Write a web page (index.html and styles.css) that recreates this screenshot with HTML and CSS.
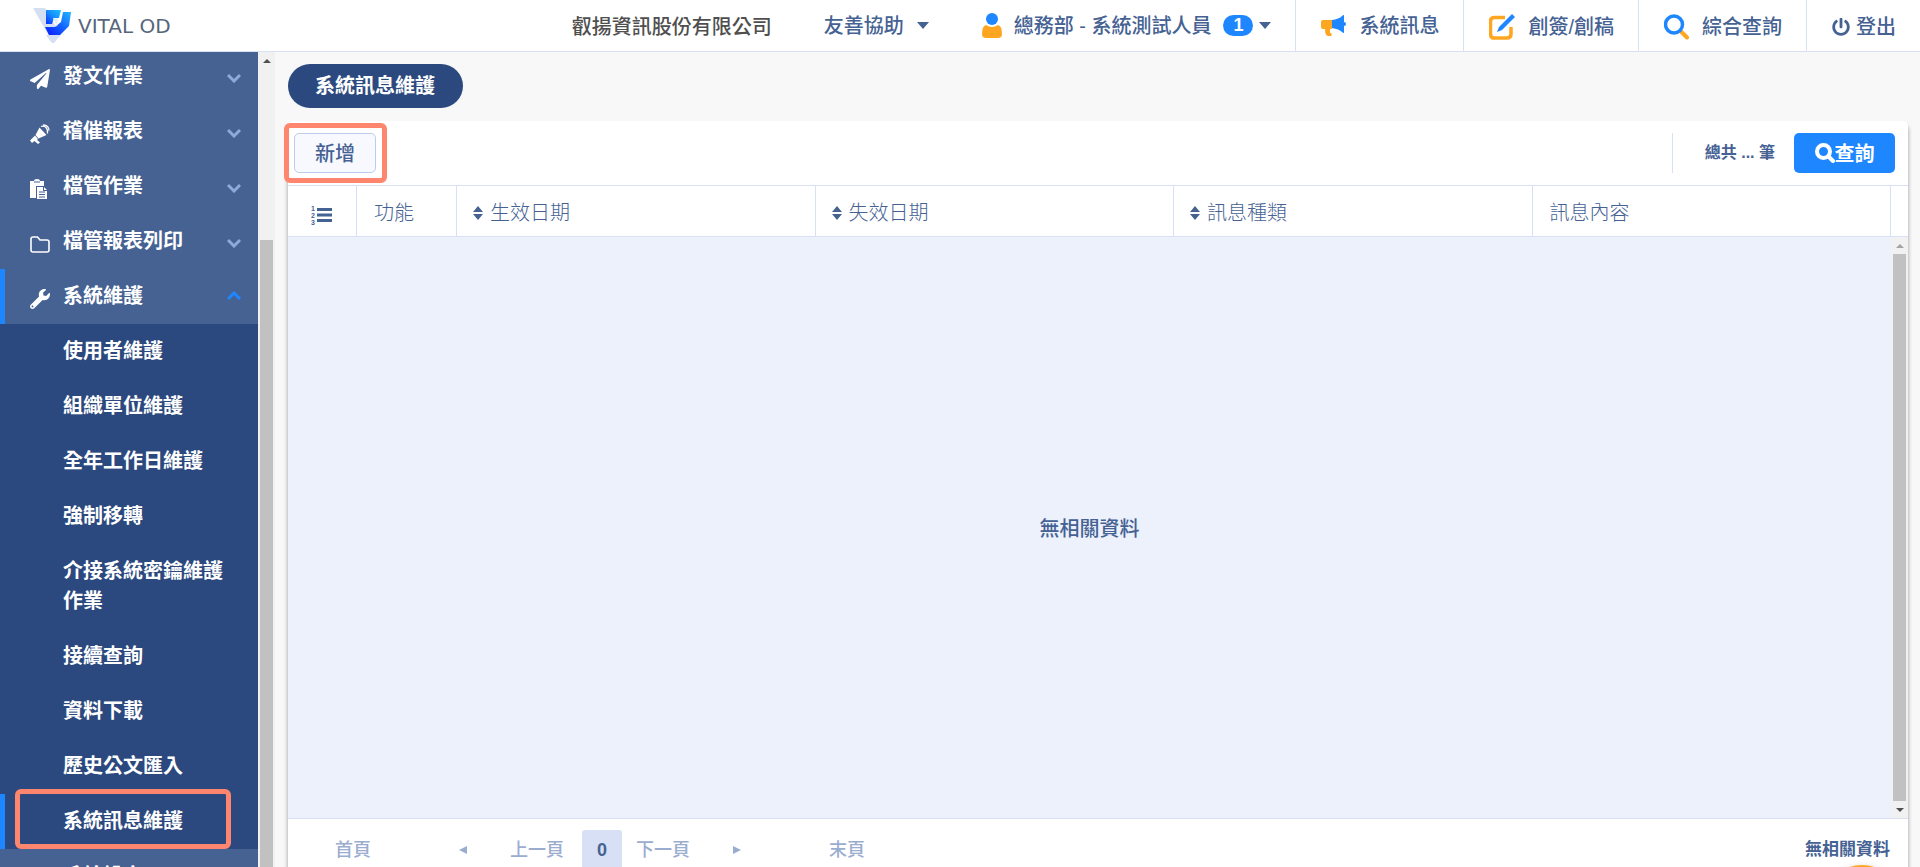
FILE: index.html
```html
<!DOCTYPE html>
<html lang="zh-Hant">
<head>
<meta charset="utf-8">
<meta name="viewport" content="width=device-width, initial-scale=1">
<title>系統訊息維護 - VITAL OD</title>
<link rel="stylesheet" href="styles.css">
</head>
<body>
<div class="shell">
  <header class="topbar">
    <a class="brand" href="#">
      <svg class="brand-mark" width="40" height="36" viewBox="0 0 40 36" aria-hidden="true">
        <defs>
          <linearGradient id="g1" x1="1" y1="0" x2="0" y2="1"><stop offset="0" stop-color="#1fc0ff"/><stop offset=".5" stop-color="#148cff"/><stop offset="1" stop-color="#0b2cff"/></linearGradient>
          <linearGradient id="g2" x1="0" y1="1" x2="1" y2="0"><stop offset="0" stop-color="#0a18ff"/><stop offset=".45" stop-color="#1258ff"/><stop offset="1" stop-color="#22b8ff"/></linearGradient>
        </defs>
        <path d="M1 0h12l16 27-8 8z" fill="#d5dff2"/>
        <path d="M14 27h14l-5 7q-2 2-4 0z" fill="#d5dff2"/>
        <path d="M14 2h15l-2 8h-5l-2 6h-6z" fill="url(#g1)"/>
        <path d="M31 4h8l-2 14-9 9H17l-4-8h10l6-5z" fill="url(#g2)"/>
        <path d="M21 10h5l-1 9z" fill="#e6ecf8"/>
      </svg>
      <span class="brand-name">VITAL OD</span>
    </a>
    <div class="company">叡揚資訊股份有限公司</div>
    <button class="top-item help" type="button">友善協助<span class="caret"></span></button>
    <button class="top-item user" type="button">
      <svg width="20" height="25" viewBox="0 0 20 25" aria-hidden="true"><circle cx="10" cy="6" r="6" fill="#1e87ff"/><path d="M4 12q6 4 12 0 4 1 4 9 0 4-4 4H4q-4 0-4-4 0-8 4-9z" fill="#ffa621"/></svg>
      <span>總務部 - 系統測試人員</span><span class="badge">1</span><span class="caret"></span>
    </button>
    <a class="top-item ruled" href="#">
      <svg width="25" height="22" viewBox="0 0 25 22" aria-hidden="true"><path d="M2 5h9v9h-2v4h1.500v3H7q-3 0-3-7H2q-2 0-2-2V7q0-2 2-2z" fill="#ffa621"/><path d="M11 5q7-1 10-4 1-1 2-1v7q2 0 2 2t-2 2v7q-1 0-2-1-3-3-10-4z" fill="#1e87ff"/></svg>
      <span>系統訊息</span>
    </a>
    <a class="top-item ruled low" href="#">
      <svg width="26" height="26" viewBox="0 0 26 26" aria-hidden="true"><path d="M16 3.500H5.500q-4 0-4 4V20q0 4 4 4H18q4 0 4-4v-7" fill="none" stroke="#ffa621" stroke-width="3.500"/><path d="M23 0l3 3-13 13-5 2 2-5z" fill="#1e87ff"/></svg>
      <span>創簽/創稿</span>
    </a>
    <a class="top-item ruled low" href="#">
      <svg width="25" height="26" viewBox="0 0 25 26" aria-hidden="true"><path d="M16.500 17l6.500 6.500" stroke="#ffa621" stroke-width="4" stroke-linecap="round"/><circle cx="10" cy="10.500" r="8.500" fill="#fff" stroke="#1e87ff" stroke-width="3.500"/></svg>
      <span>綜合查詢</span>
    </a>
    <a class="top-item ruled low logout" href="#">
      <svg width="18" height="18" viewBox="0 0 512 512" aria-hidden="true"><path fill="currentColor" d="M400 54.100c63 45 104 118.600 104 201.900 0 136.800-110.800 247.700-247.500 248C120 504.300 8.200 393 8 256.400 7.900 173.100 48.900 99.300 111.800 54.200c11.700-8.300 28-4.800 35 7.700L162.600 90c5.900 10.500 3.100 23.800-6.600 31-41.500 30.800-68 79.600-68 134.900-.1 92.300 74.500 168.100 168 168.100 91.600 0 168.600-74.200 168-169.100-.3-51.800-24.700-101.800-68.100-134-9.700-7.200-12.400-20.500-6.500-30.900l15.800-28.100c7-12.400 23.200-16.100 34.800-7.800zM296 264V24c0-13.300-10.700-24-24-24h-32c-13.300 0-24 10.700-24 24v240c0 13.300 10.700 24 24 24h32c13.300 0 24-10.700 24-24z"/></svg>
      <span>登出</span>
    </a>
  </header>

  <div class="workspace">
    <nav class="sidebar">
      <ul class="menu">
        <li><a class="menu-row" href="#">
          <svg class="menu-icon" viewBox="0 0 512 512" aria-hidden="true"><path fill="currentColor" d="M476 3.200L12.500 270.600c-18.100 10.400-15.800 35.600 2.200 43.200L121 358.400l287.300-253.200c5.500-4.900 13.300 2.600 8.600 8.300L176 407v80.500c0 23.600 28.500 32.900 42.500 15.800L282 426l124.600 52.200c14.200 6 30.400-2.900 33-18.200l72-432C515 7.800 493.300-6.800 476 3.200z"/></svg>
          <span>發文作業</span><svg class="chevron" viewBox="0 0 14 10"><path d="M1 2l6 6 6-6"/></svg></a></li>
        <li><a class="menu-row" href="#">
          <svg class="menu-icon" viewBox="0 0 20 20" aria-hidden="true"><path fill="currentColor" d="M9.500 3.500l7 7.500-8 3.500-3-3.500zM5 11.500L8 15l-1 1 3 2.500-2 1.500-3.500-3L2 19l-2-2.500z"/><path d="M11 2.500q3-1 5 1t1.500 6M13 .8q6 .2 6 6" fill="none" stroke="currentColor" stroke-width="1.200"/></svg>
          <span>稽催報表</span><svg class="chevron" viewBox="0 0 14 10"><path d="M1 2l6 6 6-6"/></svg></a></li>
        <li><a class="menu-row" href="#">
          <svg class="menu-icon" viewBox="0 0 20 20" aria-hidden="true"><path fill="currentColor" d="M0 2h4q0-2 3-2t3 2h4v5H6v12H0zM7 8h6v4h4v8H7z"/><path fill="currentColor" d="M14 8l3 3h-3z"/><path d="M4 3h6M9 13h6M9 15.500h6M9 18h6" stroke="#456293"/></svg>
          <span>檔管作業</span><svg class="chevron" viewBox="0 0 14 10"><path d="M1 2l6 6 6-6"/></svg></a></li>
        <li><a class="menu-row" href="#">
          <svg class="menu-icon" viewBox="0 0 20 20" aria-hidden="true"><path d="M3 3h4.500l2.500 3h7q2 0 2 2v8q0 2-2 2H3q-2 0-2-2V5q0-2 2-2z" fill="none" stroke="currentColor" stroke-width="1.600"/></svg>
          <span>檔管報表列印</span><svg class="chevron" viewBox="0 0 14 10"><path d="M1 2l6 6 6-6"/></svg></a></li>
        <li><a class="menu-row marked open" href="#">
          <svg class="menu-icon" viewBox="0 0 512 512" aria-hidden="true"><path fill="currentColor" d="M507.730 109.100c-2.240-9.030-13.540-12.090-20.120-5.510l-74.360 74.360-67.880-11.310-11.310-67.880 74.360-74.360c6.620-6.620 3.430-17.900-5.660-20.160-47.380-11.740-99.550.91-136.580 37.930-39.640 39.640-50.550 97.100-34.050 147.200L18.740 402.760c-24.990 24.990-24.990 65.510 0 90.500 24.990 24.990 65.510 24.990 90.500 0l213.210-213.210c50.120 16.710 107.470 5.680 147.370-34.220 37.070-37.070 49.700-89.320 37.910-136.730zM64 472c-13.250 0-24-10.750-24-24 0-13.260 10.750-24 24-24s24 10.740 24 24c0 13.250-10.750 24-24 24z"/></svg>
          <span>系統維護</span><svg class="chevron up" viewBox="0 0 14 10"><path d="M1 8l6-6 6 6"/></svg></a>
          <ul class="submenu">
            <li><a href="#">使用者維護</a></li>
            <li><a href="#">組織單位維護</a></li>
            <li><a href="#">全年工作日維護</a></li>
            <li><a href="#">強制移轉</a></li>
            <li><a href="#">介接系統密鑰維護作業</a></li>
            <li><a href="#">接續查詢</a></li>
            <li><a href="#">資料下載</a></li>
            <li><a href="#">歷史公文匯入</a></li>
            <li><a class="marked current" href="#">系統訊息維護<span class="callout callout-menu"></span></a></li>
          </ul>
        </li>
        <li><a class="menu-row" href="#"><span class="menu-icon"></span><span>系統設定</span></a></li>
      </ul>
    </nav>
    <div class="scrollbar side-scroll" aria-hidden="true"><span class="arrow up"></span><span class="thumb"></span></div>

    <main class="content">
      <h1 class="page-title">系統訊息維護</h1>
      <section class="card">
        <div class="toolbar">
          <div class="add-wrap"><button class="btn-add" type="button">新增</button><span class="callout callout-add"></span></div>
          <div class="summary">
            <span class="total">總共 ... 筆</span>
            <button class="btn-query" type="button"><svg width="20" height="20" viewBox="0 0 20 20" aria-hidden="true"><circle cx="8.500" cy="8.500" r="6.500" fill="none" stroke="currentColor" stroke-width="4"/><path d="M13.500 13.500l4.500 4.500" stroke="currentColor" stroke-width="4" stroke-linecap="round"/></svg>查詢</button>
          </div>
        </div>
        <table class="grid-head">
          <colgroup><col class="c-num"><col class="c-fn"><col><col><col><col><col class="c-end"></colgroup>
          <thead><tr>
            <th class="num" scope="col"><svg width="21" height="20" viewBox="0 0 21 20" role="img" aria-label="序號"><path d="M6 4.500h15M6 10h15M6 15.500h15" stroke="currentColor" stroke-width="3"/><text x="0" y="6">1</text><text x="0" y="13">2</text><text x="0" y="20">3</text></svg></th>
            <th scope="col">功能</th>
            <th scope="col" class="sortable"><svg class="sort" viewBox="0 0 10 14"><path d="M5 0l5 6H0zM5 14l5-6H0z"/></svg>生效日期</th>
            <th scope="col" class="sortable"><svg class="sort" viewBox="0 0 10 14"><path d="M5 0l5 6H0zM5 14l5-6H0z"/></svg>失效日期</th>
            <th scope="col" class="sortable"><svg class="sort" viewBox="0 0 10 14"><path d="M5 0l5 6H0zM5 14l5-6H0z"/></svg>訊息種類</th>
            <th scope="col">訊息內容</th>
            <td></td>
          </tr></thead>
        </table>
        <div class="grid-body">
          <p class="empty">無相關資料</p>
          <div class="scrollbar" aria-hidden="true"><span class="arrow up dim"></span><span class="thumb"></span><span class="arrow down"></span></div>
        </div>
        <footer class="pager">
          <button class="pg" type="button">首頁</button>
          <button class="pg prev" type="button"><span class="tri left"></span>上一頁</button>
          <button class="pg page" type="button">0</button>
          <button class="pg next" type="button">下一頁<span class="tri right"></span></button>
          <button class="pg" type="button">末頁</button>
          <span class="pager-info">無相關資料</span>
        </footer>
      </section>
    </main>
  </div>
  <button class="fab" type="button" aria-label="回到頂端"></button>
</div>
</body>
</html>
```

FILE: styles.css
```css
:root {
  --navy: #2b497e;
  --slate: #456293;
  --blue: #1e87ff;
  --line: #d7e0f4;
  --coral: #ff866e;
  --mixed: "Liberation Sans", "Noto Sans CJK TC", sans-serif;
}

* { box-sizing: border-box; }

body {
  margin: 0;
  font: 500 20px/30px "Noto Sans CJK TC", "Noto Sans", sans-serif;
  color: var(--slate);
  background: #f8f8f8;
}

a { color: inherit; text-decoration: none; }
button { font: inherit; color: inherit; background: none; border: 0; padding: 0; cursor: pointer; }
ul { list-style: none; margin: 0; padding: 0; }
svg { display: block; flex: none; }

.shell {
  position: relative;
  display: flex;
  flex-direction: column;
  height: 100vh;
  overflow: hidden;
}

/* Top bar */
.topbar {
  display: flex;
  flex: none;
  height: 52px;
  background: #fff;
  border-bottom: 1px solid var(--line);
}
.brand { display: flex; align-items: center; gap: 6px; padding-left: 32px; margin-right: auto; }
.brand-name { font: 20px/30px "DejaVu Sans", sans-serif; color: #56657c; }
.company { display: flex; align-items: center; color: #4f4f4f; }
.top-item { display: flex; align-items: center; gap: 13px; padding: 0 24px 0 25px; white-space: nowrap; font-family: var(--mixed); }
.help { padding: 0 0 0 52px; }
.user { padding-left: 53px; gap: 12px; }
.user .badge { margin-right: -6px; }
.ruled { border-left: 1px solid var(--line); }
.low { padding-top: 2px; }
.logout { gap: 6px; }
.badge {
  width: 30px;
  border-radius: 11px;
  background: var(--blue);
  color: #fff;
  font: bold 18px/21px "Liberation Sans", sans-serif;
}
.caret { border: 6px solid transparent; border-top: 7px solid var(--slate); border-bottom: 0; }

/* Sidebar */
.workspace { display: flex; flex: 1; min-height: 0; }
.sidebar { width: 258px; flex: none; overflow: hidden; background: var(--slate); color: #fff; font-family: var(--mixed); font-weight: 700; }
.menu { margin-top: -3px; }
.menu-row { display: flex; align-items: center; gap: 13px; height: 55px; padding: 0 17px 2px 30px; }
.menu-icon { width: 20px; height: 20px; margin-top: 6px; }
.chevron { width: 14px; height: 10px; margin: 4px 0 0 auto; fill: none; stroke: #8fa9d8; stroke-width: 3; }
.chevron.up { margin-top: 0; stroke: var(--blue); }
.marked { position: relative; }
.marked::before { content: ""; position: absolute; left: 0; top: 0; bottom: 0; width: 5px; background: var(--blue); }
.submenu { background: var(--navy); }
.submenu a { display: block; padding: 12px 30px 13px 63px; }

.callout { position: absolute; border: 5px solid var(--coral); border-radius: 6px; pointer-events: none; }
.callout-menu { left: 15px; right: 27px; top: -5px; bottom: 0; }
.callout-add { left: -10px; right: -11px; top: -10px; bottom: -10px; }

/* Scrollbars */
.scrollbar { display: flex; flex-direction: column; align-items: center; flex: none; width: 17px; background: #f1f1f1; }
.scrollbar .thumb { flex: 1; width: 13px; background: #c1c1c1; }
.arrow { display: flex; flex: none; align-items: center; height: 17px; }
.arrow::before { content: ""; border: 4px solid transparent; }
.arrow.up::before { border-bottom-color: #505050; border-top: 0; }
.arrow.down::before { border-top-color: #505050; border-bottom: 0; }
.arrow.dim::before { border-bottom-color: #a3a3a3; }
.side-scroll .thumb { margin-top: 171px; }

/* Content */
.content { display: flex; flex-direction: column; flex: 1; min-width: 0; padding: 12px 12px 0 13px; }
.page-title {
  align-self: flex-start;
  margin: 0 0 13px;
  padding: 6px 28px 8px 27px;
  border-radius: 22px;
  background: var(--navy);
  color: #fff;
  font-size: 20px;
  font-weight: 700;
}
.card {
  display: flex;
  flex-direction: column;
  flex: 1;
  min-height: 0;
  background: #fff;
  border-radius: 5px 5px 0 0;
  box-shadow: 0 4px 4px rgba(0, 0, 0, .4);
}
.toolbar { display: flex; justify-content: space-between; padding: 12px 13px 12px 6px; border-bottom: 1px solid var(--line); }
.add-wrap { position: relative; }
.btn-add { width: 82px; height: 40px; border: 1px solid #bccdec; border-radius: 5px; background: #f8f9ff; }
.summary { display: flex; align-items: center; gap: 19px; height: 40px; padding-left: 32px; border-left: 1px solid var(--line); }
.total { font-family: var(--mixed); font-size: 16px; font-weight: 700; }
.btn-query {
  display: flex;
  align-items: center;
  justify-content: center;
  width: 101px;
  height: 40px;
  border-radius: 5px;
  background: var(--blue);
  color: #fff;
  font-weight: 700;
}

.grid-head { width: 100%; table-layout: fixed; border-collapse: separate; border-spacing: 0; }
.c-num { width: 69px; }
.c-fn { width: 100px; }
.c-end { width: 17px; }
.grid-head th {
  height: 51px;
  padding: 2px 17px 0;
  border-right: 1px solid var(--line);
  border-bottom: 1px solid var(--line);
  font-weight: 300;
  text-align: left;
}
.grid-head td { padding: 0; border-bottom: 1px solid var(--line); }
.grid-head .num { padding: 8px 0 0 23px; }
.grid-head text { font: bold 7px "Liberation Sans", sans-serif; fill: currentColor; }
.sort { display: inline-block; width: 10px; height: 14px; margin-right: 7px; fill: var(--slate); }
.grid-head .sortable { padding-left: 16px; }

.grid-body { display: flex; flex: 1; min-height: 0; background: #edf1fc; }
.empty { flex: 1; margin: auto; text-align: center; }

.pager {
  display: flex;
  align-items: flex-start;
  flex: none;
  height: 49px;
  padding: 11px 18px 0 47px;
  border-top: 1px solid var(--line);
  font-family: var(--mixed);
  font-size: 18px;
}
.pg { display: flex; align-items: center; height: 40px; color: #9badcf; }
.prev { gap: 43px; margin-left: 88px; }
.next { gap: 43px; margin-right: 88px; }
.page { justify-content: center; width: 40px; margin: 0 14px 0 18px; border-radius: 3px; background: #d7e0f4; color: var(--slate); font-weight: 700; }
.tri { border: 4px solid transparent; }
.tri.left { border-right: 8px solid #9badcf; border-left: 0; }
.tri.right { border-left: 8px solid #9badcf; border-right: 0; }
.pager-info { margin-left: auto; font-size: 17px; line-height: 40px; font-weight: 700; }

.fab {
  position: absolute;
  right: 18px;
  bottom: -78px;
  width: 80px;
  height: 80px;
  border-radius: 50%;
  background: #ffa621;
  box-shadow: 0 0 6px rgba(0, 0, 0, .1);
}
```
